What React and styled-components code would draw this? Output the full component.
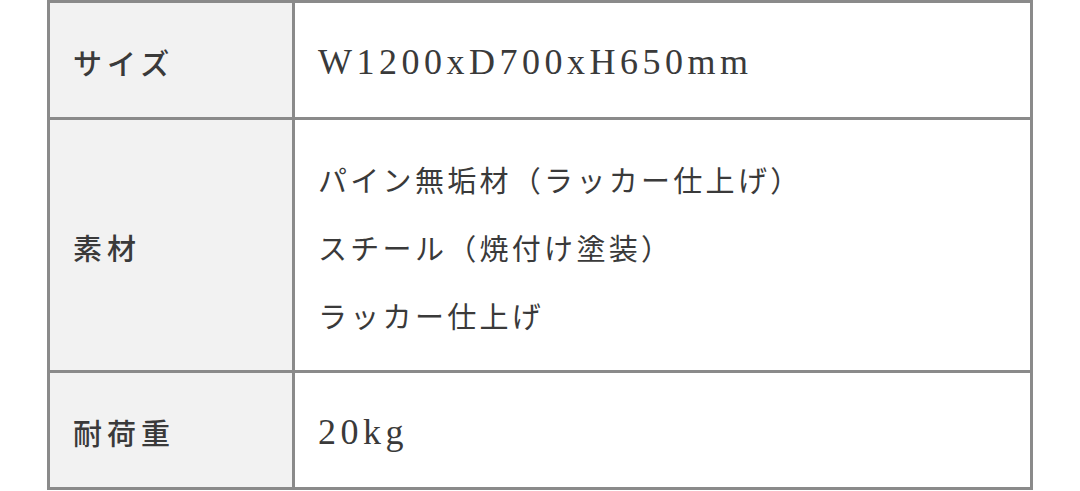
import React from 'react';
import styled, { createGlobalStyle } from 'styled-components';

const GlobalStyle = createGlobalStyle`
    html, body {
        margin: 0;
        padding: 0;
        background: #fff;
    }
    body {
        font-family: "Noto Sans CJK JP", "Liberation Serif", serif;
        color: #333;
    }
`;

const Page = styled.div`
    width: 1080px;
    height: 491px;
    overflow: hidden;
    background: #fff;
`;

const SpecTable = styled.table`
    width: 986px;
    margin: 0 auto;
    border-collapse: collapse;
    border: 3px solid #8a8a8a;
    table-layout: fixed;
`;

const Head = styled.th`
    width: 219px;
    padding: 25px 0 21px 23px;
    background: #f2f2f2;
    border: 3px solid #8a8a8a;
    text-align: left;
    vertical-align: middle;
    font-family: "Noto Sans CJK JP", sans-serif;
    font-size: 29px;
    font-weight: 500;
    letter-spacing: 5px;
    line-height: 67px;
    color: #3a3a3a;
`;

const Cell = styled.td`
    padding: 25px 24px 21px 23px;
    border: 3px solid #8a8a8a;
    vertical-align: middle;
    font-family: "Noto Sans CJK JP", sans-serif;
    font-size: 29px;
    font-weight: 400;
    letter-spacing: 3.3px;
    line-height: 67px;
    color: #3a3a3a;
`;

const Line = styled.div`
    white-space: nowrap;
    line-height: ${(p) => (p.$tall ? '68px' : '67px')};
`;

const Latin = styled.span`
    font-family: "Liberation Serif", serif;
    font-size: 36px;
    letter-spacing: 4.5px;
`;

const specs = [
    { label: 'サイズ', lines: [<Latin key="s">W1200xD700xH650mm</Latin>] },
    { label: '素材', lines: ['パイン無垢材（ラッカー仕上げ）', 'スチール（焼付け塗装）', 'ラッカー仕上げ'] },
    { label: '耐荷重', lines: [<Latin key="w">20kg</Latin>] },
];

export default function App() {
    return (
        <Page>
            <GlobalStyle />
            <SpecTable>
                <tbody>
                    {specs.map((spec) => (
                        <tr key={spec.label}>
                            <Head>{spec.label}</Head>
                            <Cell>
                                {spec.lines.map((line, i) => (
                                    <Line key={i} $tall={spec.lines.length > 1}>{line}</Line>
                                ))}
                            </Cell>
                        </tr>
                    ))}
                </tbody>
            </SpecTable>
        </Page>
    );
}
